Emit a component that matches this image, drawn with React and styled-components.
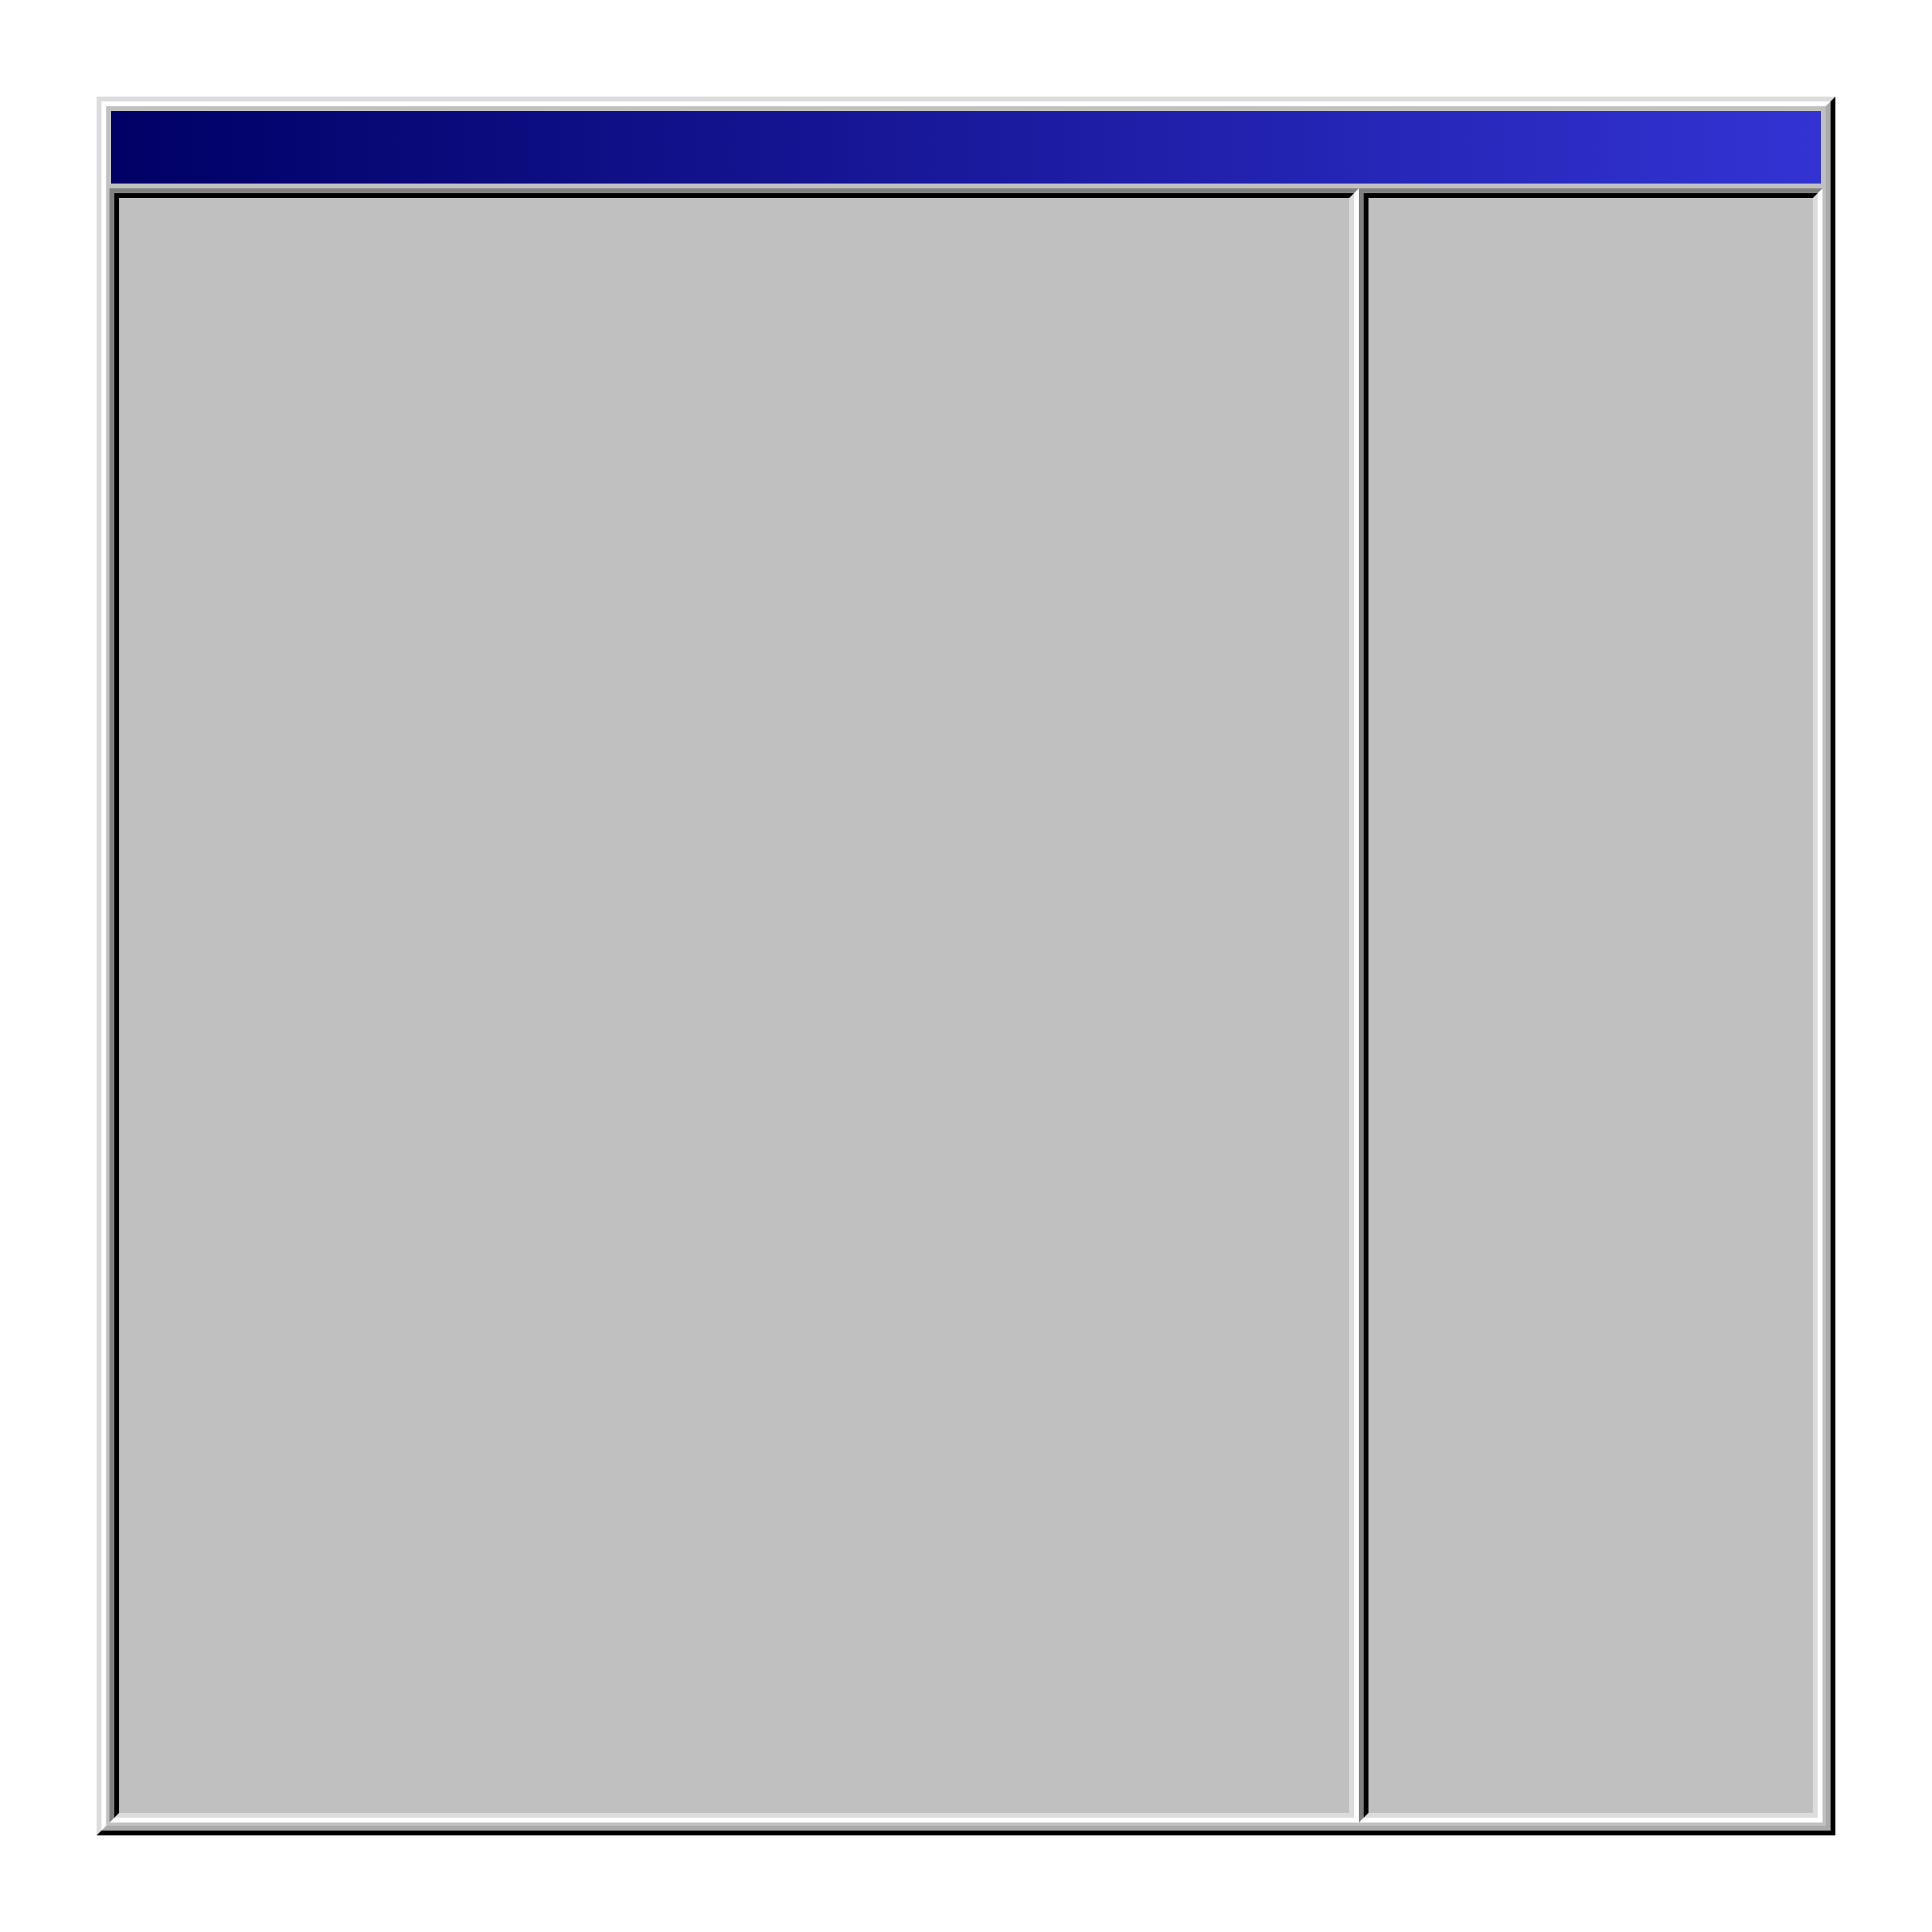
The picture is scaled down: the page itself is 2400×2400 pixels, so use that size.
import React from "react";
import styled, { createGlobalStyle } from "styled-components";

const GlobalStyle = createGlobalStyle`
  html, body {
    margin: 0;
    padding: 0;
    background: #ffffff;
    font-family: "Liberation Sans", Arial, sans-serif;
  }
  body {
    padding: 120px;
  }
  * {
    box-sizing: border-box;
  }
`;

// outer bevel, two layers: light top-left, dark bottom-right
const Window = styled.div`
  width: 2160px;
  height: 2160px;
  border: 6px solid;
  border-color: #dcdcdc #000000 #000000 #dcdcdc;
`;

const Frame = styled.div`
  height: 100%;
  border: 6px solid;
  border-color: #ffffff #aaaaaa #aaaaaa #ffffff;
  background-color: #c0c0c0;
  padding: 4px;
  display: flex;
  flex-direction: column;
  gap: 6px;
`;

const TitleBar = styled.div`
  height: 90px;
  margin: 2px 2px 0;
  flex-shrink: 0;
  background: linear-gradient(to right, #000066, #3333d4);
`;

const Body = styled.div`
  flex: 1;
  display: flex;
`;

// sunken panel: dark top-left, light bottom-right
const Panel = styled.div`
  width: ${(p) => p.width}px;
  flex-shrink: 0;
  border: 6px solid;
  border-color: #808080 #ffffff #ffffff #808080;
`;

const PanelInner = styled.div`
  height: 100%;
  border: 6px solid;
  border-color: #000000 #dcdcdc #dcdcdc #000000;
  background-color: #c0c0c0;
`;

function App() {
  return (
    <>
      <GlobalStyle />
      <Window>
        <Frame>
          <TitleBar />
          <Body>
            <Panel width={1552}>
              <PanelInner />
            </Panel>
            <Panel width={576}>
              <PanelInner />
            </Panel>
          </Body>
        </Frame>
      </Window>
    </>
  );
}

export default App;
